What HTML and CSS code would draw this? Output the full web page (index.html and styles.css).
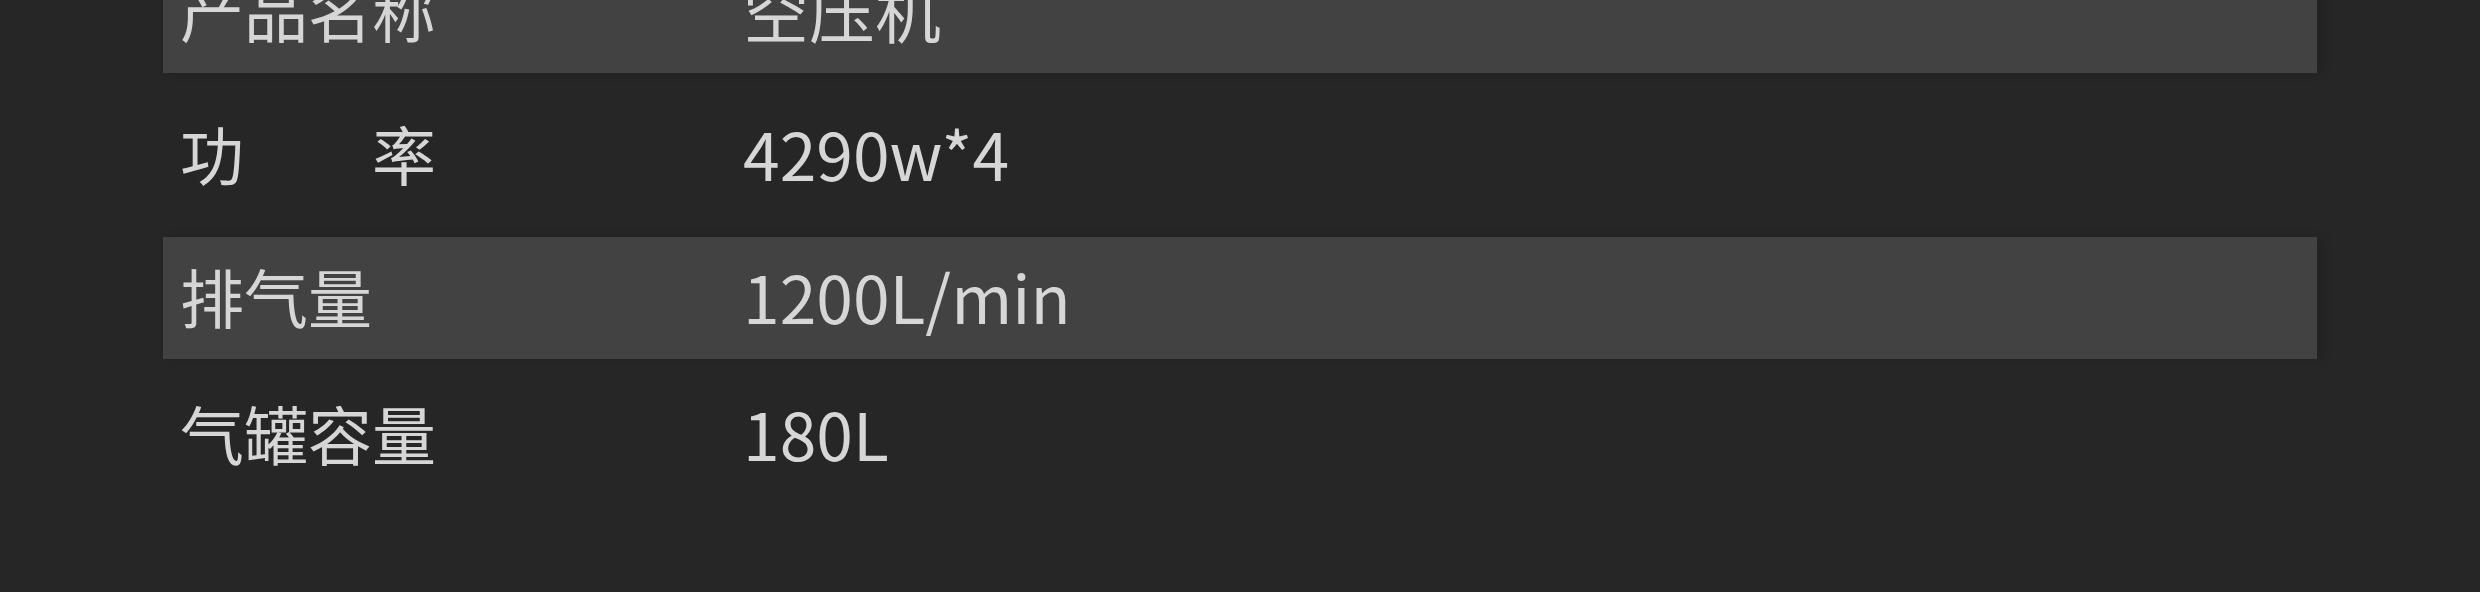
FILE: index.html
```html
<!DOCTYPE html>
<html lang="zh-CN">
<head>
<meta charset="utf-8">
<title>产品参数</title>
<link rel="stylesheet" href="styles.css">
</head>
<body>
<div class="spec">
  <div class="row row-alt row-first">
    <div class="label">产品名称</div>
    <div class="value">空压机</div>
  </div>
  <div class="row row-plain">
    <div class="label">功　　率</div>
    <div class="value">4290w*4</div>
  </div>
  <div class="row row-alt">
    <div class="label">排气量</div>
    <div class="value">1200L/min</div>
  </div>
  <div class="row row-plain row-last">
    <div class="label">气罐容量</div>
    <div class="value">180L</div>
  </div>
</div>
</body>
</html>
```

FILE: styles.css
```css
html, body {
  margin: 0;
  padding: 0;
  background: #262626;
  width: 2480px;
  height: 592px;
  overflow: hidden;
}

.spec {
  margin: -49px 0 0 163px;
  width: 2154px;
  display: flex;
  flex-direction: column;
  font-family: "Noto Sans CJK SC", "Noto Sans", sans-serif;
  font-size: 64px;
  color: #d6d6d6;
}

.row {
  display: flex;
  align-items: center;
  padding: 0 0 7px 17px;
  box-sizing: border-box;
}

.row-alt {
  background: #424242;
  height: 122px;
  box-shadow: 6px 0 10px rgba(0, 0, 0, 0.12);
}

.row-first {
  height: 122px;
}

.row-plain {
  height: 164px;
}

.row-last {
  height: 152px;
}

.label {
  width: 563px;
  flex: none;
  white-space: pre;
  line-height: 1;
}

.value {
  line-height: 1;
  font-size: 66px;
}
```
